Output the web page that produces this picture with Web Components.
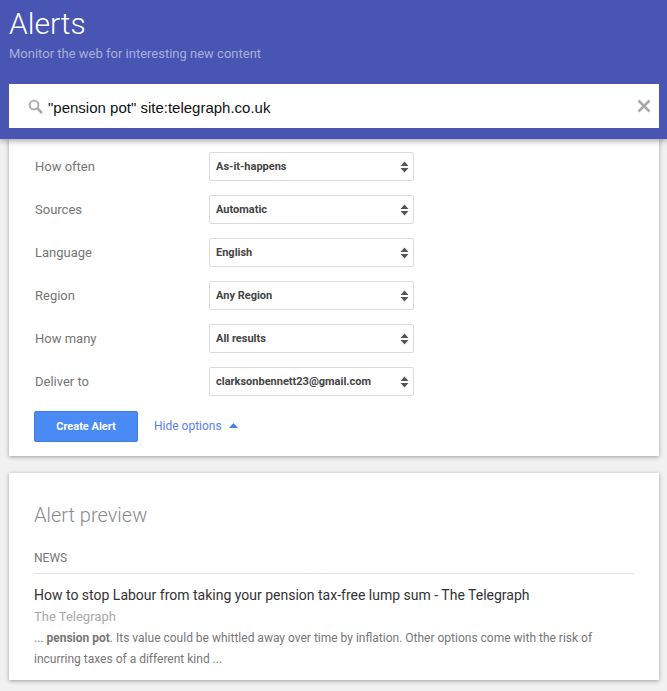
<!DOCTYPE html>
<html>
<head>
<meta charset="utf-8">
<title>Alerts</title>
<style>
    html, body { margin: 0; padding: 0; }
    body {
        background: #f1f1f1;
        font-family: Roboto, "Liberation Sans", sans-serif;
        height: 691px;
        overflow: hidden;
    }
</style>
</head>
<body>
<alerts-header heading="Alerts" sub="Monitor the web for interesting new content" query='"pension pot" site:telegraph.co.uk'></alerts-header>
<options-card>
    <option-row label="How often" value="As-it-happens"></option-row>
    <option-row label="Sources" value="Automatic"></option-row>
    <option-row label="Language" value="English"></option-row>
    <option-row label="Region" value="Any Region"></option-row>
    <option-row label="How many" value="All results"></option-row>
    <option-row label="Deliver to" value="clarksonbennett23@gmail.com"></option-row>
</options-card>
<preview-card>
    <span slot="title">How to stop Labour from taking your pension tax-free lump sum - The Telegraph</span>
    <span slot="source">The Telegraph</span>
    <span slot="snippet">... <b>pension pot</b>. Its value could be whittled away over time by inflation. Other options come with the risk of incurring taxes of a different kind ...</span>
</preview-card>

<script>
class AlertsHeader extends HTMLElement {
    constructor() {
        super();
        this.attachShadow({ mode: 'open' });
        this.shadowRoot.innerHTML = `
            <style>
                :host {
                    display: block;
                    position: relative;
                    z-index: 2;
                    height: 139px;
                    box-sizing: border-box;
                    padding: 0 8px 0 9px;
                    background: #4855b2;
                    box-shadow: 0 2px 6px rgba(0,0,0,.35);
                }
                h1 {
                    margin: 0;
                    padding-top: 5px;
                    height: 41px;
                    font-size: 30px;
                    line-height: 38px;
                    font-weight: 300;
                    color: #fff;
                }
                p {
                    margin: 0;
                    height: 38px;
                    font-size: 13px;
                    line-height: 16px;
                    color: #a9afdc;
                }
                .search {
                    display: flex;
                    align-items: center;
                    height: 44px;
                    background: #fff;
                    padding: 0 8px 0 19px;
                }
                .query {
                    flex: 1;
                    margin-left: 5px;
                    padding-top: 3px;
                    font-family: "Liberation Sans", sans-serif;
                    font-size: 15px;
                    color: #111;
                }
                svg { display: block; }
            </style>
            <h1>${this.getAttribute('heading')}</h1>
            <p>${this.getAttribute('sub')}</p>
            <div class="search">
                <svg width="15" height="15" viewBox="0 0 15 15" fill="none" stroke="#aaa">
                    <circle cx="6" cy="6" r="4.4" stroke-width="1.9"/>
                    <path d="M9.2 9.2 L14 14" stroke-width="2.5"/>
                </svg>
                <span class="query"></span>
                <svg width="14" height="14" viewBox="0 0 14 14" fill="none" stroke="#aaa" stroke-width="2.6">
                    <path d="M1.5 1.5 L12.5 12.5 M12.5 1.5 L1.5 12.5"/>
                </svg>
            </div>
        `;
        this.shadowRoot.querySelector('.query').textContent = this.getAttribute('query');
    }
}

class OptionRow extends HTMLElement {
    constructor() {
        super();
        this.attachShadow({ mode: 'open' });
        this.shadowRoot.innerHTML = `
            <style>
                :host {
                    display: flex;
                    align-items: center;
                    height: 29px;
                    margin-bottom: 14px;
                }
                .label {
                    width: 174px;
                    padding-left: 1px;
                    font-size: 13px;
                    color: #757575;
                }
                .select {
                    width: 205px;
                    height: 29px;
                    box-sizing: border-box;
                    display: flex;
                    align-items: center;
                    justify-content: space-between;
                    padding: 0 4px 0 6px;
                    background: #fff;
                    border: 1px solid #dcdcdc;
                    border-radius: 2px;
                    font-size: 11px;
                    font-weight: 700;
                    color: #444;
                }
                svg { display: block; }
            </style>
            <span class="label">${this.getAttribute('label')}</span>
            <div class="select">
                <span>${this.getAttribute('value')}</span>
                <svg width="9" height="12" viewBox="0 0 9 12" fill="#555">
                    <path d="M4.5 0.5 L8.5 5 L0.5 5 Z M0.5 7 L8.5 7 L4.5 11.5 Z"/>
                </svg>
            </div>
        `;
    }
}

class OptionsCard extends HTMLElement {
    constructor() {
        super();
        this.attachShadow({ mode: 'open' });
        this.shadowRoot.innerHTML = `
            <style>
                :host {
                    display: block;
                    margin: 0 8px 0 9px;
                    padding: 13px 25px 14px;
                    height: 317px;
                    box-sizing: border-box;
                    background: #fff;
                    box-shadow: 0 1px 4px rgba(0,0,0,.35);
                }
                /* collapses with the last row's 14px margin */
                .actions {
                    display: flex;
                    align-items: center;
                    margin-top: 15px;
                }
                .create {
                    width: 104px;
                    height: 31px;
                    box-sizing: border-box;
                    display: flex;
                    align-items: center;
                    justify-content: center;
                    background: #4a8af4;
                    border: 1px solid #3f7de0;
                    border-radius: 2px;
                    color: #fff;
                    font-size: 11px;
                    font-weight: 700;
                }
                .toggle {
                    margin-left: 16px;
                    margin-bottom: 2px;
                    font-size: 12px;
                    color: #5c7fe8;
                }
                svg { display: block; margin: 0 0 2px 7px; }
            </style>
            <slot></slot>
            <div class="actions">
                <div class="create">Create Alert</div>
                <span class="toggle">Hide options</span>
                <svg width="9" height="5" viewBox="0 0 9 5" fill="#4a7fe8"><path d="M4.5 0 L9 5 L0 5 Z"/></svg>
            </div>
        `;
    }
}

class PreviewCard extends HTMLElement {
    constructor() {
        super();
        this.attachShadow({ mode: 'open' });
        this.shadowRoot.innerHTML = `
            <style>
                :host {
                    display: block;
                    margin: 17px 8px 0 9px;
                    padding: 29px 25px 0;
                    height: 207px;
                    box-sizing: border-box;
                    background: #fff;
                    box-shadow: 0 1px 4px rgba(0,0,0,.35);
                }
                h2 {
                    margin: 0;
                    height: 45px;
                    font-size: 20px;
                    line-height: 26px;
                    font-weight: 300;
                    color: #8a8a8a;
                }
                .section {
                    height: 27px;
                    box-sizing: border-box;
                    border-bottom: 1px solid #e3e3e3;
                    font-size: 12px;
                    line-height: 22px;
                    color: #777;
                }
                .title {
                    margin-top: 12px;
                    font-size: 14px;
                    line-height: 18px;
                    color: #333;
                }
                .source {
                    margin-top: 4px;
                    font-size: 13px;
                    line-height: 18px;
                    color: #aaa;
                }
                .snippet {
                    margin-top: 2px;
                    font-size: 12px;
                    line-height: 21px;
                    color: #777;
                }
            </style>
            <h2>Alert preview</h2>
            <div class="section">NEWS</div>
            <div class="title"><slot name="title"></slot></div>
            <div class="source"><slot name="source"></slot></div>
            <div class="snippet"><slot name="snippet"></slot></div>
        `;
    }
}

customElements.define('alerts-header', AlertsHeader);
customElements.define('option-row', OptionRow);
customElements.define('options-card', OptionsCard);
customElements.define('preview-card', PreviewCard);
</script>
</body>
</html>
